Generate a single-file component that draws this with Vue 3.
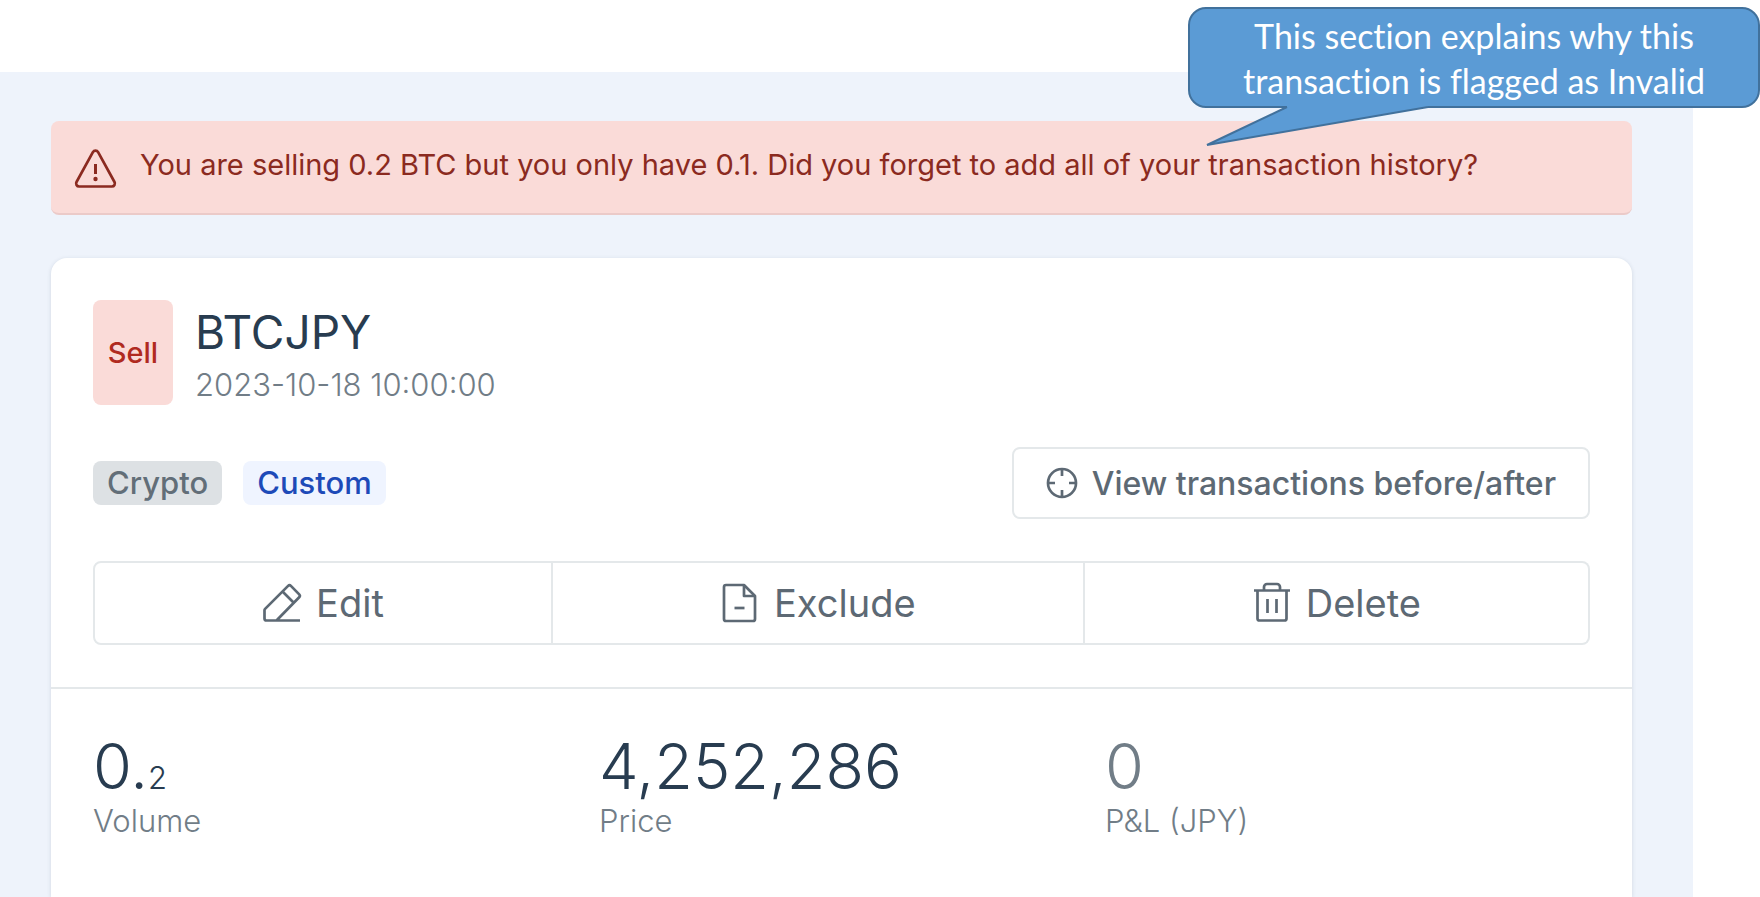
<template>
  <div class="page">
    <aside class="callout">
      <svg class="callout-tail" width="226" height="46" viewBox="0 0 226 46" aria-hidden="true">
        <path class="tail-fill" d="M81 3v2L1 43 222 5V3z" />
        <path class="tail-line" d="M81 5 1 43 222 5" />
      </svg>
      <p class="callout-text">This section explains why this transaction is flagged as Invalid</p>
    </aside>

    <main class="panel">
      <div class="alert" role="alert">
        <svg class="icon" width="44" height="40" viewBox="0 0 44 40" aria-hidden="true">
          <path d="M18.9 3.2a3 3 0 0 1 5.2 0L40.5 33a3 3 0 0 1-2.6 4.5H5.1A3 3 0 0 1 2.5 33z" />
          <path d="M21.5 15v10" stroke-width="3" />
          <circle cx="21.5" cy="30" r="2.2" fill="currentColor" stroke="none" />
        </svg>
        <p class="alert-text">{{ warning }}</p>
      </div>

      <section class="card">
        <div class="card-top">
          <header class="heading">
            <span class="side">Sell</span>
            <div>
              <h1 class="pair">BTCJPY</h1>
              <time class="date" datetime="2023-10-18T10:00:00">2023-10-18 10:00:00</time>
            </div>
          </header>

          <div class="tag-row">
            <span class="tag tag-grey">Crypto</span>
            <span class="tag tag-blue">Custom</span>
            <button type="button" class="view-btn">
              <svg class="icon" width="32" height="32" viewBox="0 0 32 32" aria-hidden="true">
                <circle cx="16" cy="16" r="14" />
                <path d="M16 2v7M16 23v7M2 16h7M23 16h7" />
              </svg>
              View transactions before/after
            </button>
          </div>

          <div class="actions">
            <button v-for="action in actions" :key="action.label" type="button" class="action">
              <svg class="icon" width="40" height="40" viewBox="0 0 40 40" aria-hidden="true">
                <path v-for="d in action.paths" :key="d" :d="d" />
              </svg>
              {{ action.label }}
            </button>
          </div>
        </div>

        <dl class="stats">
          <div v-for="stat in stats" :key="stat.label" class="stat">
            <dt class="stat-label">{{ stat.label }}</dt>
            <dd class="stat-value" :class="{ muted: stat.muted }">
              {{ stat.value }}<span v-if="stat.decimals" class="decimals">{{ stat.decimals }}</span>
            </dd>
          </div>
        </dl>
      </section>
    </main>
  </div>
</template>

<script setup>
const warning =
  'You are selling 0.2 BTC but you only have 0.1. Did you forget to add all of your transaction history?'

const actions = [
  {
    label: 'Edit',
    paths: [
      'M14.5 37.5 37.2 14.2a2 2 0 0 0 0-2.8L28.9 2.9a2 2 0 0 0-2.8 0L3.1 25.9a2 2 0 0 0-.6 1.4V35.5a2 2 0 0 0 2 2H38',
      'M20.5 8.5l11 11'
    ]
  },
  {
    label: 'Exclude',
    paths: [
      'M6 2h18l11 11v23a2 2 0 0 1-2 2H6a2 2 0 0 1-2-2V4a2 2 0 0 1 2-2z',
      'M24 2v11h11',
      'M14.5 25h10'
    ]
  },
  {
    label: 'Delete',
    paths: [
      'M2 7.5h36',
      'M12 7.5V4a3 3 0 0 1 3-3h10a3 3 0 0 1 3 3v3.5',
      'M5.5 7.5v28a2 2 0 0 0 2 2h25a2 2 0 0 0 2-2V7.5',
      'M15.5 16v14M24.5 16v14'
    ]
  }
]

const stats = [
  { label: 'Volume', value: '0.', decimals: '2' },
  { label: 'Price', value: '4,252,286' },
  { label: 'P&L (JPY)', value: '0', muted: true }
]
</script>

<style>
body {
  margin: 0;
  background: #fff;
}
</style>

<style scoped>
.page {
  position: relative;
  display: flex;
  flex-direction: column;
  min-height: 100vh;
  box-sizing: border-box;
  padding: 72px 67px 0 0;
  font-family: Inter, 'Liberation Sans', sans-serif;
  color: #283c50;
}

.icon {
  flex: none;
  fill: none;
  overflow: visible;
  stroke: currentColor;
  stroke-width: 2.7;
  stroke-linejoin: round;
}

/* Speech bubble over the alert */
.callout {
  position: absolute;
  top: 7px;
  right: 0;
  display: flex;
  align-items: center;
  justify-content: center;
  width: 572px;
  height: 101px;
  box-sizing: border-box;
  border: 2px solid #41719c;
  border-radius: 18px;
  background: #5b9bd5;
}

.callout-text {
  width: 510px;
  margin: 0;
  color: #fff;
  font-family: Lato, 'Liberation Sans', sans-serif;
  font-size: 34px;
  font-variant-ligatures: none;
  line-height: 45px;
  text-align: center;
}

.callout-tail {
  position: absolute;
  top: 93px;
  left: 16px;
}

.tail-fill {
  fill: #5b9bd5;
}

.tail-line {
  fill: none;
  stroke: #41719c;
  stroke-width: 2;
}

.panel {
  display: flex;
  flex: 1;
  flex-direction: column;
  gap: 43px;
  padding: 49px 61px 0 51px;
  background: #eef3fb;
}

.alert {
  display: flex;
  align-items: center;
  gap: 22px;
  min-height: 94px;
  box-sizing: border-box;
  padding: 4px 23px 0;
  border-bottom: 2px solid #ebcac8;
  border-radius: 8px;
  background: #fadbd8;
  color: #8b2a20;
}

.alert-text {
  margin: 0 0 8px;
  font-size: 29px;
  font-weight: 400;
  line-height: 40px;
}

.card {
  flex: 1;
  border-radius: 16px 16px 0 0;
  background: #fff;
  box-shadow: 0 1px 4px rgba(40, 60, 80, 0.15);
}

.card-top {
  display: flex;
  flex-direction: column;
  gap: 42px;
  padding: 42px;
  border-bottom: 2px solid #e4e8ea;
}

.heading {
  display: flex;
  gap: 22px;
}

.side {
  display: flex;
  align-items: center;
  justify-content: center;
  width: 80px;
  border-radius: 8px;
  background: #fadbd8;
  color: #b02a20;
  font-size: 29px;
  font-weight: 500;
}

.pair {
  margin: 0;
  font-size: 46px;
  font-weight: 400;
  line-height: 64px;
}

.date {
  display: block;
  color: #717d87;
  font-size: 31px;
  font-weight: 300;
  line-height: 41px;
}

.tag-row {
  display: flex;
  align-items: center;
  gap: 21px;
}

.tag {
  padding: 0 14px;
  border-radius: 8px;
  font-size: 31px;
  font-weight: 500;
  line-height: 44px;
}

.tag-grey {
  background: #dde1e4;
  color: #626e78;
}

.tag-blue {
  background: #eff4ff;
  color: #1d4ab8;
}

.view-btn,
.action {
  display: flex;
  align-items: center;
  justify-content: center;
  margin: 0;
  border: 2px solid #e4e8ea;
  background: #fff;
  color: #5d6974;
  font-family: inherit;
  cursor: pointer;
}

.view-btn {
  gap: 14px;
  height: 72px;
  margin-left: auto;
  padding: 0 32px;
  border-radius: 8px;
  font-size: 32px;
  font-weight: 500;
}

.actions {
  display: flex;
}

.action {
  flex: 1 1 auto;
  gap: 14px;
  height: 84px;
  padding: 0;
  font-size: 38px;
  font-weight: 400;
}

.action + .action {
  border-left: 0;
}

.action:first-child {
  border-radius: 8px 0 0 8px;
}

.action:last-child {
  border-radius: 0 8px 8px 0;
}

.stats {
  display: grid;
  grid-template-columns: repeat(3, 1fr);
  margin: 0;
  padding: 42px 21px 42px 42px;
}

.stat {
  display: flex;
  flex-direction: column-reverse;
  justify-content: flex-end;
}

.stat-value {
  margin: 0;
  font-size: 63px;
  font-weight: 300;
  line-height: 70px;
}

.muted {
  color: #717d87;
}

.decimals {
  font-size: 31px;
  line-height: 32px;
}

.stat-label {
  color: #717d87;
  font-size: 31px;
  font-weight: 300;
  line-height: 40px;
}
</style>
